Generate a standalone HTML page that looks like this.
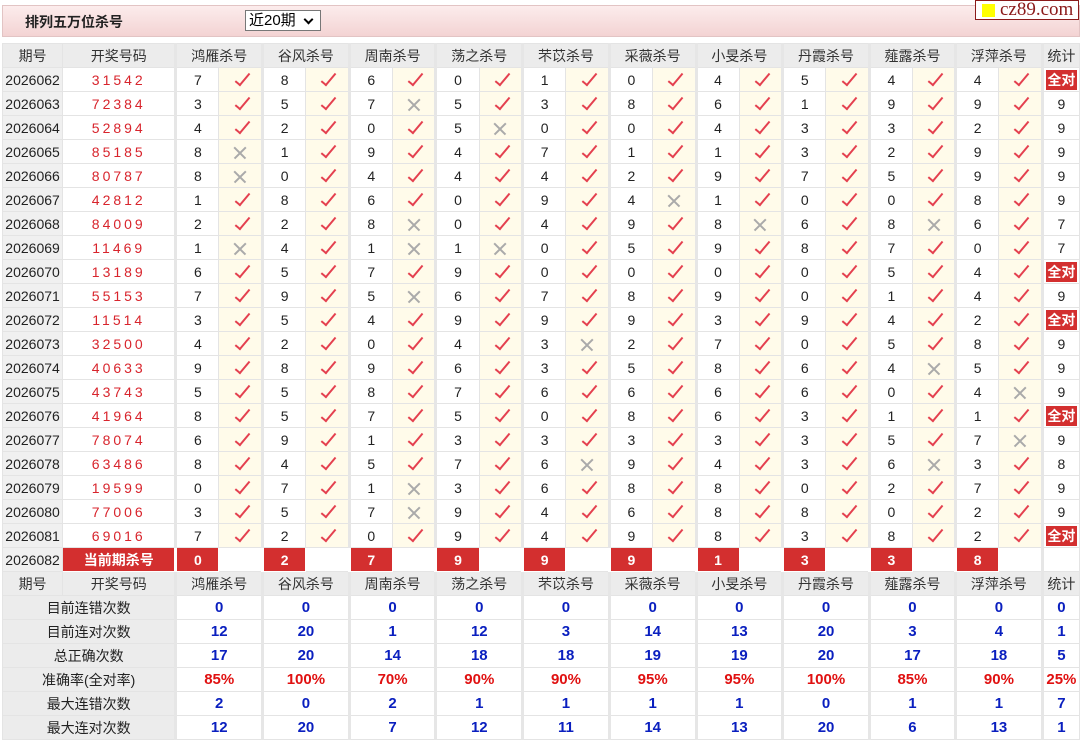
<!DOCTYPE html>
<html><head><meta charset="utf-8"><style>
body{margin:0;background:#fff;font-family:"Liberation Sans","Noto Sans CJK SC",sans-serif;width:1083px;height:739px;overflow:hidden;position:relative}
.bar{position:absolute;left:2px;top:5px;width:1076px;height:30px;background:linear-gradient(#fcecec,#f3d3d3);border:1px solid #e2c4c4}
.bar .t{position:absolute;left:22px;top:6px;font-size:14px;font-weight:bold;color:#222}
.sel{position:absolute;left:242px;top:4px;border:1px solid #777;background:#fff;font-size:15px;line-height:19px;padding-left:3px;box-sizing:border-box;width:76px;height:21px}
.sel:after{content:"";position:absolute;right:8px;top:5px;width:5px;height:5px;border-right:2px solid #000;border-bottom:2px solid #000;transform:rotate(45deg)}
.logo{position:absolute;left:975px;top:0;width:104px;height:20px;background:#fff;border:1px solid #8b1a1a;box-sizing:border-box;font-family:"Liberation Serif",serif;font-size:19px;line-height:18px;color:#8b1a1a;padding-left:24px}
.logo:before{content:"";position:absolute;left:6px;top:3px;width:13px;height:13px;background:#ffff00}
table{position:absolute;left:2px;top:43px;border-collapse:collapse;table-layout:fixed;width:1078px}
td{height:23px;border:1px solid #e4e4e4;text-align:center;font-size:14px;color:#222;padding:0;line-height:22px;overflow:hidden;white-space:nowrap}
tr.h td{background:#ececec;color:#333}
td.p{background:#f0f0f0}
td.k{color:#d8242c;letter-spacing:3px}
td.c{background:#fffbea}
td.g{border-left:3px solid #e6e6e6}
.y{display:inline-block;width:5px;height:14px;border-right:2px solid #e4404f;border-bottom:2px solid #e4404f;transform:rotate(40deg);margin-top:1px;margin-left:4px;vertical-align:top}
.n{display:inline-block;width:14px;height:14px;position:relative;vertical-align:middle}
.n:before,.n:after{content:"";position:absolute;left:-1px;top:6px;width:16px;height:1.5px;background:#aaa;transform:rotate(45deg)}
.n:after{transform:rotate(-45deg)}
td.s b{display:block;margin:1px 2px;background:#d32f2f;color:#fff;font-size:14px;line-height:20px}
td.r{background:#d32f2f;color:#fff;font-weight:bold;border-color:#fff}
td.l{background:#ececec}
td.b{color:#0a1fbf;font-weight:bold;font-size:15px}
td.q{color:#e01010;font-weight:bold;font-size:15px}
</style></head><body>
<div class="bar"><span class="t">排列五万位杀号</span><div class="sel">近20期</div></div>
<div class="logo">cz89.com</div>
<table>
<colgroup><col style="width:60px"><col style="width:113px">
<col style="width:43px"><col style="width:43.5px"><col style="width:43px"><col style="width:43.5px"><col style="width:43px"><col style="width:43.5px"><col style="width:43px"><col style="width:43.5px"><col style="width:43px"><col style="width:43.5px"><col style="width:43px"><col style="width:43.5px"><col style="width:43px"><col style="width:43.5px"><col style="width:43px"><col style="width:43.5px"><col style="width:43px"><col style="width:43px"><col style="width:43px"><col style="width:43.5px"><col style="width:37px"></colgroup>
<tr class="h"><td>期号</td><td>开奖号码</td><td class="g" colspan="2">鸿雁杀号</td><td class="g" colspan="2">谷风杀号</td><td class="g" colspan="2">周南杀号</td><td class="g" colspan="2">荡之杀号</td><td class="g" colspan="2">芣苡杀号</td><td class="g" colspan="2">采薇杀号</td><td class="g" colspan="2">小旻杀号</td><td class="g" colspan="2">丹霞杀号</td><td class="g" colspan="2">薤露杀号</td><td class="g" colspan="2">浮萍杀号</td><td class="g">统计</td></tr>
<tr><td class="p">2026062</td><td class="k">31542</td><td class="g">7</td><td class="c"><i class="y"></i></td><td class="g">8</td><td class="c"><i class="y"></i></td><td class="g">6</td><td class="c"><i class="y"></i></td><td class="g">0</td><td class="c"><i class="y"></i></td><td class="g">1</td><td class="c"><i class="y"></i></td><td class="g">0</td><td class="c"><i class="y"></i></td><td class="g">4</td><td class="c"><i class="y"></i></td><td class="g">5</td><td class="c"><i class="y"></i></td><td class="g">4</td><td class="c"><i class="y"></i></td><td class="g">4</td><td class="c"><i class="y"></i></td><td class="g s"><b>全对</b></td></tr>
<tr><td class="p">2026063</td><td class="k">72384</td><td class="g">3</td><td class="c"><i class="y"></i></td><td class="g">5</td><td class="c"><i class="y"></i></td><td class="g">7</td><td class="c"><i class="n"></i></td><td class="g">5</td><td class="c"><i class="y"></i></td><td class="g">3</td><td class="c"><i class="y"></i></td><td class="g">8</td><td class="c"><i class="y"></i></td><td class="g">6</td><td class="c"><i class="y"></i></td><td class="g">1</td><td class="c"><i class="y"></i></td><td class="g">9</td><td class="c"><i class="y"></i></td><td class="g">9</td><td class="c"><i class="y"></i></td><td class="g">9</td></tr>
<tr><td class="p">2026064</td><td class="k">52894</td><td class="g">4</td><td class="c"><i class="y"></i></td><td class="g">2</td><td class="c"><i class="y"></i></td><td class="g">0</td><td class="c"><i class="y"></i></td><td class="g">5</td><td class="c"><i class="n"></i></td><td class="g">0</td><td class="c"><i class="y"></i></td><td class="g">0</td><td class="c"><i class="y"></i></td><td class="g">4</td><td class="c"><i class="y"></i></td><td class="g">3</td><td class="c"><i class="y"></i></td><td class="g">3</td><td class="c"><i class="y"></i></td><td class="g">2</td><td class="c"><i class="y"></i></td><td class="g">9</td></tr>
<tr><td class="p">2026065</td><td class="k">85185</td><td class="g">8</td><td class="c"><i class="n"></i></td><td class="g">1</td><td class="c"><i class="y"></i></td><td class="g">9</td><td class="c"><i class="y"></i></td><td class="g">4</td><td class="c"><i class="y"></i></td><td class="g">7</td><td class="c"><i class="y"></i></td><td class="g">1</td><td class="c"><i class="y"></i></td><td class="g">1</td><td class="c"><i class="y"></i></td><td class="g">3</td><td class="c"><i class="y"></i></td><td class="g">2</td><td class="c"><i class="y"></i></td><td class="g">9</td><td class="c"><i class="y"></i></td><td class="g">9</td></tr>
<tr><td class="p">2026066</td><td class="k">80787</td><td class="g">8</td><td class="c"><i class="n"></i></td><td class="g">0</td><td class="c"><i class="y"></i></td><td class="g">4</td><td class="c"><i class="y"></i></td><td class="g">4</td><td class="c"><i class="y"></i></td><td class="g">4</td><td class="c"><i class="y"></i></td><td class="g">2</td><td class="c"><i class="y"></i></td><td class="g">9</td><td class="c"><i class="y"></i></td><td class="g">7</td><td class="c"><i class="y"></i></td><td class="g">5</td><td class="c"><i class="y"></i></td><td class="g">9</td><td class="c"><i class="y"></i></td><td class="g">9</td></tr>
<tr><td class="p">2026067</td><td class="k">42812</td><td class="g">1</td><td class="c"><i class="y"></i></td><td class="g">8</td><td class="c"><i class="y"></i></td><td class="g">6</td><td class="c"><i class="y"></i></td><td class="g">0</td><td class="c"><i class="y"></i></td><td class="g">9</td><td class="c"><i class="y"></i></td><td class="g">4</td><td class="c"><i class="n"></i></td><td class="g">1</td><td class="c"><i class="y"></i></td><td class="g">0</td><td class="c"><i class="y"></i></td><td class="g">0</td><td class="c"><i class="y"></i></td><td class="g">8</td><td class="c"><i class="y"></i></td><td class="g">9</td></tr>
<tr><td class="p">2026068</td><td class="k">84009</td><td class="g">2</td><td class="c"><i class="y"></i></td><td class="g">2</td><td class="c"><i class="y"></i></td><td class="g">8</td><td class="c"><i class="n"></i></td><td class="g">0</td><td class="c"><i class="y"></i></td><td class="g">4</td><td class="c"><i class="y"></i></td><td class="g">9</td><td class="c"><i class="y"></i></td><td class="g">8</td><td class="c"><i class="n"></i></td><td class="g">6</td><td class="c"><i class="y"></i></td><td class="g">8</td><td class="c"><i class="n"></i></td><td class="g">6</td><td class="c"><i class="y"></i></td><td class="g">7</td></tr>
<tr><td class="p">2026069</td><td class="k">11469</td><td class="g">1</td><td class="c"><i class="n"></i></td><td class="g">4</td><td class="c"><i class="y"></i></td><td class="g">1</td><td class="c"><i class="n"></i></td><td class="g">1</td><td class="c"><i class="n"></i></td><td class="g">0</td><td class="c"><i class="y"></i></td><td class="g">5</td><td class="c"><i class="y"></i></td><td class="g">9</td><td class="c"><i class="y"></i></td><td class="g">8</td><td class="c"><i class="y"></i></td><td class="g">7</td><td class="c"><i class="y"></i></td><td class="g">0</td><td class="c"><i class="y"></i></td><td class="g">7</td></tr>
<tr><td class="p">2026070</td><td class="k">13189</td><td class="g">6</td><td class="c"><i class="y"></i></td><td class="g">5</td><td class="c"><i class="y"></i></td><td class="g">7</td><td class="c"><i class="y"></i></td><td class="g">9</td><td class="c"><i class="y"></i></td><td class="g">0</td><td class="c"><i class="y"></i></td><td class="g">0</td><td class="c"><i class="y"></i></td><td class="g">0</td><td class="c"><i class="y"></i></td><td class="g">0</td><td class="c"><i class="y"></i></td><td class="g">5</td><td class="c"><i class="y"></i></td><td class="g">4</td><td class="c"><i class="y"></i></td><td class="g s"><b>全对</b></td></tr>
<tr><td class="p">2026071</td><td class="k">55153</td><td class="g">7</td><td class="c"><i class="y"></i></td><td class="g">9</td><td class="c"><i class="y"></i></td><td class="g">5</td><td class="c"><i class="n"></i></td><td class="g">6</td><td class="c"><i class="y"></i></td><td class="g">7</td><td class="c"><i class="y"></i></td><td class="g">8</td><td class="c"><i class="y"></i></td><td class="g">9</td><td class="c"><i class="y"></i></td><td class="g">0</td><td class="c"><i class="y"></i></td><td class="g">1</td><td class="c"><i class="y"></i></td><td class="g">4</td><td class="c"><i class="y"></i></td><td class="g">9</td></tr>
<tr><td class="p">2026072</td><td class="k">11514</td><td class="g">3</td><td class="c"><i class="y"></i></td><td class="g">5</td><td class="c"><i class="y"></i></td><td class="g">4</td><td class="c"><i class="y"></i></td><td class="g">9</td><td class="c"><i class="y"></i></td><td class="g">9</td><td class="c"><i class="y"></i></td><td class="g">9</td><td class="c"><i class="y"></i></td><td class="g">3</td><td class="c"><i class="y"></i></td><td class="g">9</td><td class="c"><i class="y"></i></td><td class="g">4</td><td class="c"><i class="y"></i></td><td class="g">2</td><td class="c"><i class="y"></i></td><td class="g s"><b>全对</b></td></tr>
<tr><td class="p">2026073</td><td class="k">32500</td><td class="g">4</td><td class="c"><i class="y"></i></td><td class="g">2</td><td class="c"><i class="y"></i></td><td class="g">0</td><td class="c"><i class="y"></i></td><td class="g">4</td><td class="c"><i class="y"></i></td><td class="g">3</td><td class="c"><i class="n"></i></td><td class="g">2</td><td class="c"><i class="y"></i></td><td class="g">7</td><td class="c"><i class="y"></i></td><td class="g">0</td><td class="c"><i class="y"></i></td><td class="g">5</td><td class="c"><i class="y"></i></td><td class="g">8</td><td class="c"><i class="y"></i></td><td class="g">9</td></tr>
<tr><td class="p">2026074</td><td class="k">40633</td><td class="g">9</td><td class="c"><i class="y"></i></td><td class="g">8</td><td class="c"><i class="y"></i></td><td class="g">9</td><td class="c"><i class="y"></i></td><td class="g">6</td><td class="c"><i class="y"></i></td><td class="g">3</td><td class="c"><i class="y"></i></td><td class="g">5</td><td class="c"><i class="y"></i></td><td class="g">8</td><td class="c"><i class="y"></i></td><td class="g">6</td><td class="c"><i class="y"></i></td><td class="g">4</td><td class="c"><i class="n"></i></td><td class="g">5</td><td class="c"><i class="y"></i></td><td class="g">9</td></tr>
<tr><td class="p">2026075</td><td class="k">43743</td><td class="g">5</td><td class="c"><i class="y"></i></td><td class="g">5</td><td class="c"><i class="y"></i></td><td class="g">8</td><td class="c"><i class="y"></i></td><td class="g">7</td><td class="c"><i class="y"></i></td><td class="g">6</td><td class="c"><i class="y"></i></td><td class="g">6</td><td class="c"><i class="y"></i></td><td class="g">6</td><td class="c"><i class="y"></i></td><td class="g">6</td><td class="c"><i class="y"></i></td><td class="g">0</td><td class="c"><i class="y"></i></td><td class="g">4</td><td class="c"><i class="n"></i></td><td class="g">9</td></tr>
<tr><td class="p">2026076</td><td class="k">41964</td><td class="g">8</td><td class="c"><i class="y"></i></td><td class="g">5</td><td class="c"><i class="y"></i></td><td class="g">7</td><td class="c"><i class="y"></i></td><td class="g">5</td><td class="c"><i class="y"></i></td><td class="g">0</td><td class="c"><i class="y"></i></td><td class="g">8</td><td class="c"><i class="y"></i></td><td class="g">6</td><td class="c"><i class="y"></i></td><td class="g">3</td><td class="c"><i class="y"></i></td><td class="g">1</td><td class="c"><i class="y"></i></td><td class="g">1</td><td class="c"><i class="y"></i></td><td class="g s"><b>全对</b></td></tr>
<tr><td class="p">2026077</td><td class="k">78074</td><td class="g">6</td><td class="c"><i class="y"></i></td><td class="g">9</td><td class="c"><i class="y"></i></td><td class="g">1</td><td class="c"><i class="y"></i></td><td class="g">3</td><td class="c"><i class="y"></i></td><td class="g">3</td><td class="c"><i class="y"></i></td><td class="g">3</td><td class="c"><i class="y"></i></td><td class="g">3</td><td class="c"><i class="y"></i></td><td class="g">3</td><td class="c"><i class="y"></i></td><td class="g">5</td><td class="c"><i class="y"></i></td><td class="g">7</td><td class="c"><i class="n"></i></td><td class="g">9</td></tr>
<tr><td class="p">2026078</td><td class="k">63486</td><td class="g">8</td><td class="c"><i class="y"></i></td><td class="g">4</td><td class="c"><i class="y"></i></td><td class="g">5</td><td class="c"><i class="y"></i></td><td class="g">7</td><td class="c"><i class="y"></i></td><td class="g">6</td><td class="c"><i class="n"></i></td><td class="g">9</td><td class="c"><i class="y"></i></td><td class="g">4</td><td class="c"><i class="y"></i></td><td class="g">3</td><td class="c"><i class="y"></i></td><td class="g">6</td><td class="c"><i class="n"></i></td><td class="g">3</td><td class="c"><i class="y"></i></td><td class="g">8</td></tr>
<tr><td class="p">2026079</td><td class="k">19599</td><td class="g">0</td><td class="c"><i class="y"></i></td><td class="g">7</td><td class="c"><i class="y"></i></td><td class="g">1</td><td class="c"><i class="n"></i></td><td class="g">3</td><td class="c"><i class="y"></i></td><td class="g">6</td><td class="c"><i class="y"></i></td><td class="g">8</td><td class="c"><i class="y"></i></td><td class="g">8</td><td class="c"><i class="y"></i></td><td class="g">0</td><td class="c"><i class="y"></i></td><td class="g">2</td><td class="c"><i class="y"></i></td><td class="g">7</td><td class="c"><i class="y"></i></td><td class="g">9</td></tr>
<tr><td class="p">2026080</td><td class="k">77006</td><td class="g">3</td><td class="c"><i class="y"></i></td><td class="g">5</td><td class="c"><i class="y"></i></td><td class="g">7</td><td class="c"><i class="n"></i></td><td class="g">9</td><td class="c"><i class="y"></i></td><td class="g">4</td><td class="c"><i class="y"></i></td><td class="g">6</td><td class="c"><i class="y"></i></td><td class="g">8</td><td class="c"><i class="y"></i></td><td class="g">8</td><td class="c"><i class="y"></i></td><td class="g">0</td><td class="c"><i class="y"></i></td><td class="g">2</td><td class="c"><i class="y"></i></td><td class="g">9</td></tr>
<tr><td class="p">2026081</td><td class="k">69016</td><td class="g">7</td><td class="c"><i class="y"></i></td><td class="g">2</td><td class="c"><i class="y"></i></td><td class="g">0</td><td class="c"><i class="y"></i></td><td class="g">9</td><td class="c"><i class="y"></i></td><td class="g">4</td><td class="c"><i class="y"></i></td><td class="g">9</td><td class="c"><i class="y"></i></td><td class="g">8</td><td class="c"><i class="y"></i></td><td class="g">3</td><td class="c"><i class="y"></i></td><td class="g">8</td><td class="c"><i class="y"></i></td><td class="g">2</td><td class="c"><i class="y"></i></td><td class="g s"><b>全对</b></td></tr>
<tr><td class="p">2026082</td><td class="r">当前期杀号</td><td class="g r">0</td><td></td><td class="g r">2</td><td></td><td class="g r">7</td><td></td><td class="g r">9</td><td></td><td class="g r">9</td><td></td><td class="g r">9</td><td></td><td class="g r">1</td><td></td><td class="g r">3</td><td></td><td class="g r">3</td><td></td><td class="g r">8</td><td></td><td class="g"></td></tr>
<tr class="h"><td>期号</td><td>开奖号码</td><td class="g" colspan="2">鸿雁杀号</td><td class="g" colspan="2">谷风杀号</td><td class="g" colspan="2">周南杀号</td><td class="g" colspan="2">荡之杀号</td><td class="g" colspan="2">芣苡杀号</td><td class="g" colspan="2">采薇杀号</td><td class="g" colspan="2">小旻杀号</td><td class="g" colspan="2">丹霞杀号</td><td class="g" colspan="2">薤露杀号</td><td class="g" colspan="2">浮萍杀号</td><td class="g">统计</td></tr>
<tr><td class="l" colspan="2">目前连错次数</td><td class="g b" colspan="2">0</td><td class="g b" colspan="2">0</td><td class="g b" colspan="2">0</td><td class="g b" colspan="2">0</td><td class="g b" colspan="2">0</td><td class="g b" colspan="2">0</td><td class="g b" colspan="2">0</td><td class="g b" colspan="2">0</td><td class="g b" colspan="2">0</td><td class="g b" colspan="2">0</td><td class="g b">0</td></tr>
<tr><td class="l" colspan="2">目前连对次数</td><td class="g b" colspan="2">12</td><td class="g b" colspan="2">20</td><td class="g b" colspan="2">1</td><td class="g b" colspan="2">12</td><td class="g b" colspan="2">3</td><td class="g b" colspan="2">14</td><td class="g b" colspan="2">13</td><td class="g b" colspan="2">20</td><td class="g b" colspan="2">3</td><td class="g b" colspan="2">4</td><td class="g b">1</td></tr>
<tr><td class="l" colspan="2">总正确次数</td><td class="g b" colspan="2">17</td><td class="g b" colspan="2">20</td><td class="g b" colspan="2">14</td><td class="g b" colspan="2">18</td><td class="g b" colspan="2">18</td><td class="g b" colspan="2">19</td><td class="g b" colspan="2">19</td><td class="g b" colspan="2">20</td><td class="g b" colspan="2">17</td><td class="g b" colspan="2">18</td><td class="g b">5</td></tr>
<tr><td class="l" colspan="2">准确率(全对率)</td><td class="g q" colspan="2">85%</td><td class="g q" colspan="2">100%</td><td class="g q" colspan="2">70%</td><td class="g q" colspan="2">90%</td><td class="g q" colspan="2">90%</td><td class="g q" colspan="2">95%</td><td class="g q" colspan="2">95%</td><td class="g q" colspan="2">100%</td><td class="g q" colspan="2">85%</td><td class="g q" colspan="2">90%</td><td class="g q">25%</td></tr>
<tr><td class="l" colspan="2">最大连错次数</td><td class="g b" colspan="2">2</td><td class="g b" colspan="2">0</td><td class="g b" colspan="2">2</td><td class="g b" colspan="2">1</td><td class="g b" colspan="2">1</td><td class="g b" colspan="2">1</td><td class="g b" colspan="2">1</td><td class="g b" colspan="2">0</td><td class="g b" colspan="2">1</td><td class="g b" colspan="2">1</td><td class="g b">7</td></tr>
<tr><td class="l" colspan="2">最大连对次数</td><td class="g b" colspan="2">12</td><td class="g b" colspan="2">20</td><td class="g b" colspan="2">7</td><td class="g b" colspan="2">12</td><td class="g b" colspan="2">11</td><td class="g b" colspan="2">14</td><td class="g b" colspan="2">13</td><td class="g b" colspan="2">20</td><td class="g b" colspan="2">6</td><td class="g b" colspan="2">13</td><td class="g b">1</td></tr>
</table>
</body></html>
